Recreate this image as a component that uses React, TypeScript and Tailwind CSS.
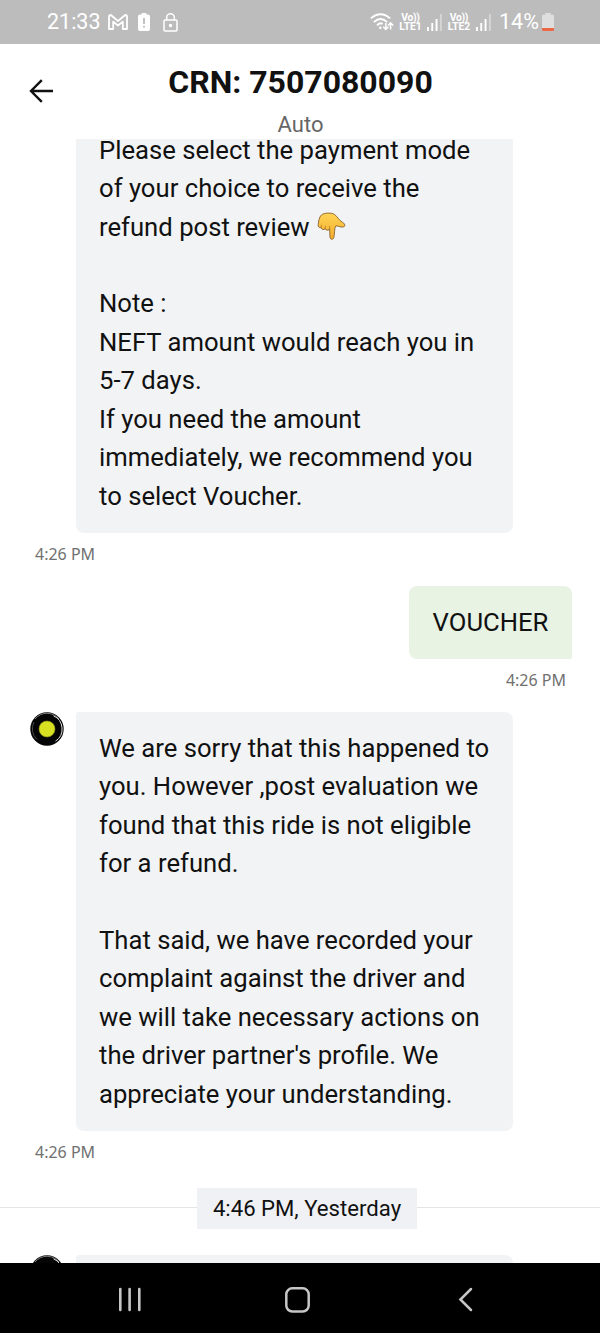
import type { ReactNode } from "react";

function StatusBar() {
  return (
    <header className="flex h-11 shrink-0 items-center justify-between bg-[#bcbcbc] pr-[46px] pl-[47px] text-white">
      <div className="flex items-center">
        <span className="w-[61px] text-[21.5px] leading-none whitespace-nowrap">21:33</span>
        <svg width="20" height="16" viewBox="0 0 20 16" fill="none" stroke="white" strokeWidth="1.8" strokeLinejoin="round">
          <path d="M1 2.8Q1 1 2.8 1L10 7L17.2 1Q19 1 19 2.8V15H14.8V7.6L10 11.5L5.2 7.6V15H1Z" />
        </svg>
        <svg className="ml-[10px]" width="12" height="18" viewBox="0 0 12 18">
          <path d="M3.5 1Q3.5 0 4.5 0H7.5Q8.5 0 8.5 1V1.5H10Q12 1.5 12 3.5V16Q12 18 10 18H2Q0 18 0 16V3.5Q0 1.5 2 1.5H3.5Z" fill="white" />
          <path d="M6 5V11M6 12.7V14.5" stroke="#bcbcbc" strokeWidth="1.8" />
        </svg>
        <svg className="ml-[13px]" width="15" height="19" viewBox="0 0 15 19" fill="none" stroke="white" strokeWidth="1.5">
          <rect x="1" y="7" width="13" height="11" rx="1" />
          <path d="M3.7 7V4.5A3.8 3.8 0 0 1 11.3 4.5V7" />
          <circle cx="7.5" cy="12.5" r="1" fill="white" />
        </svg>
      </div>
      <div className="flex items-center">
        <svg width="24" height="18" viewBox="0 0 24 18" fill="none" stroke="white" strokeWidth="1.9">
          <path d="M.8 5.4Q10.5-3 20.2 5.4M3.8 9.1Q10.5 3 17.2 9.1M7 12.4Q10.2 9.2 12.6 11" />
          <circle cx="10.3" cy="14.7" r="1.3" fill="white" stroke="none" />
          <path d="M15.8 10V16M13.2 13.7L15.8 16.4L18.4 13.7M20.6 16.5V10.2M18 12.6L20.6 9.9L23.2 12.6" strokeWidth="1.5" />
        </svg>
        <Volte name="LTE1" />
        <Signal />
        <Volte name="LTE2" />
        <Signal />
        <span className="ml-[8.5px] w-[43px] text-[21.5px] leading-none whitespace-nowrap">14%</span>
        <svg width="12" height="18" viewBox="0 0 12 18">
          <path d="M3.3 0H8.7V1.7H11Q12 1.7 12 2.7V15H0V2.7Q0 1.7 1 1.7H3.3Z" fill="#dedede" />
          <path d="M0 15H12V16.5Q12 18 10.5 18H1.5Q0 18 0 16.5Z" fill="#ee6744" />
        </svg>
      </div>
    </header>
  );
}

function Volte({ name }: { name: string }) {
  return (
    <span className="ml-[5.5px] flex w-[23px] flex-col items-center text-[10.3px] leading-[9.5px] font-bold whitespace-nowrap">
      <span className="tracking-[-0.3px]">Vo))</span>
      <span>{name}</span>
    </span>
  );
}

function Signal() {
  return (
    <svg className="ml-[5px]" width="15" height="17" viewBox="0 0 15 17" fill="white">
      <rect y="13" width="1.9" height="4" />
      <rect x="4.3" y="9" width="1.9" height="8" />
      <rect x="8.6" y="5" width="1.9" height="12" />
      <rect x="12.9" width="1.9" height="17" opacity=".4" />
    </svg>
  );
}

function PointingDown() {
  return (
    <svg className="ml-[1.5px] inline-block align-[-5px]" width="29" height="29" viewBox="0 0 29 29">
      <defs>
        <linearGradient id="skin" x1="0" y1="0" x2="0" y2="1">
          <stop offset="0" stopColor="#ffd456" />
          <stop offset="1" stopColor="#f3ad2c" />
        </linearGradient>
      </defs>
      <path
        d="M4.4 3C7 .7 14.5.4 17.6 2.5C20.7 4.7 21.8 8.3 25.4 10.2C28.5 11.8 28.6 15.1 25.6 15.1C22.5 15.1 20.5 13.4 18.6 14.1C17.3 16.5 17.8 22 16.8 25.7C16.2 28 13.1 27.7 13 25.2L12.6 16.9C11.8 18.7 9 18.7 8.3 16.8C6.7 18.2 4.5 17.5 4.1 15.7C2 16 .8 14.5 1.2 12.6C1.6 9.4 2 5.2 4.4 3Z"
        fill="url(#skin)"
        stroke="#89602e"
        strokeWidth=".9"
      />
      <path d="M4.1 15.7L4.4 12.8M8.3 16.8V13.8M12.6 16.9V13.9" fill="none" stroke="#b87822" strokeWidth=".8" />
    </svg>
  );
}

function Avatar() {
  return (
    <svg className="shrink-0" width="34" height="34" viewBox="0 0 34 34">
      <circle cx="17" cy="17" r="16.7" fill="#050505" />
      <path d="M5 7A15.4 15.4 0 0 1 29 7" fill="none" stroke="#999" strokeWidth=".8" />
      <path d="M23.5 3.8A14.5 14.5 0 0 1 25.5 29.2" fill="none" stroke="#ddd" strokeWidth="1" />
      <path d="M4 10A14.5 14.5 0 0 0 7 27.5" fill="none" stroke="#777" strokeWidth=".6" />
      <circle cx="17" cy="17" r="8" fill="#d8e022" stroke="#8e961c" strokeWidth=".6" />
    </svg>
  );
}

function Bubble({ children }: { children: ReactNode }) {
  return (
    <div className="w-[437px] rounded-tl-[3px] rounded-tr-lg rounded-br-lg rounded-bl-lg bg-[#f2f3f5] px-[23px] pt-[17px] pb-[17.5px] text-[25.66px] leading-[38.45px] whitespace-pre">
      {children}
    </div>
  );
}

function Time({ children }: { children: ReactNode }) {
  return <time className="font-['Noto_Sans',sans-serif] text-[16px] leading-[22px] text-[#707070]">{children}</time>;
}

export default function App() {
  return (
    <div className="flex h-[1333px] w-[600px] flex-col overflow-hidden bg-white font-[Roboto,sans-serif] text-[#111]">
      <StatusBar />
      <div className="grid h-[95px] shrink-0 grid-cols-[76px_449px_75px]">
        <button className="mt-[35px] ml-[29px] h-6 w-6" aria-label="Back">
          <svg width="24" height="24" viewBox="0 0 24 24" fill="none" stroke="#111" strokeWidth="2.4">
            <path d="M24 12H2M12.8 1.2L2 12L12.8 22.8" />
          </svg>
        </button>
        <div className="flex flex-col items-center whitespace-nowrap">
          <h1 className="mt-[18px] text-[32px] leading-[40px] font-bold">CRN: 7507080090</h1>
          <p className="mt-[8px] text-[22px] leading-[29px] text-[#666]">Auto</p>
        </div>
      </div>
      <main className="flex h-[1124px] shrink-0 flex-col overflow-hidden">
        <div className="-mt-[25.4px] ml-[76px] shrink-0">
          <Bubble>
            {"Please select the payment mode\nof your choice to receive the\nrefund post review "}
            <PointingDown />
            {"\n\nNote :\nNEFT amount would reach you in\n5-7 days.\nIf you need the amount\nimmediately, we recommend you\nto select Voucher."}
          </Bubble>
        </div>
        <div className="mt-[10px] ml-[35px] flex shrink-0">
          <Time>4:26 PM</Time>
        </div>
        <div className="mt-[21px] mr-[28px] flex h-[73px] w-[163px] shrink-0 items-center justify-center self-end rounded-tl-lg rounded-tr-lg rounded-br-[2px] rounded-bl-lg bg-[#e8f3e4] text-[25.66px]">
          VOUCHER
        </div>
        <div className="mt-[10px] mr-[34px] flex shrink-0 justify-end">
          <Time>4:26 PM</Time>
        </div>
        <div className="mt-[21px] ml-[30px] flex shrink-0 gap-3">
          <Avatar />
          <Bubble>
            {"We are sorry that this happened to\nyou. However ,post evaluation we\nfound that this ride is not eligible\nfor a refund.\n\nThat said, we have recorded your\ncomplaint against the driver and\nwe will take necessary actions on\nthe driver partner's profile. We\nappreciate your understanding."}
          </Bubble>
        </div>
        <div className="mt-[10px] ml-[35px] flex shrink-0">
          <Time>4:26 PM</Time>
        </div>
        <div className="mt-[25px] flex h-[41px] shrink-0 items-center">
          <div className="mb-[2px] h-px w-[197px] bg-[#e3e4e6]" />
          <div className="flex h-[41px] w-[220px] items-center justify-center bg-[#f0f1f5] text-[22.15px] whitespace-nowrap">4:46 PM, Yesterday</div>
          <div className="mb-[2px] h-px flex-1 bg-[#e3e4e6]" />
        </div>
        <div className="mt-[26px] ml-[30px] flex shrink-0 gap-3">
          <Avatar />
          <div className="h-20 w-[437px] rounded-lg rounded-tl-[3px] bg-[#f2f3f5]" />
        </div>
      </main>
      <nav className="flex h-[70px] shrink-0 items-center bg-black pt-[3px] pl-[118px]">
        <svg width="24" height="25" viewBox="0 0 24 25" stroke="#c6c6c6" strokeWidth="2.6" strokeLinecap="round">
          <path d="M2.3 2V23M11.6 2V23M21.3 2V23" />
        </svg>
        <svg className="ml-[143px]" width="25" height="26" viewBox="0 0 25 26" fill="none" stroke="#c6c6c6" strokeWidth="2.5">
          <rect x="1.3" y="1.3" width="22.4" height="23.2" rx="6" />
        </svg>
        <svg className="ml-[148px]" width="15" height="25" viewBox="0 0 15 25" fill="none" stroke="#c6c6c6" strokeWidth="2.5" strokeLinecap="round" strokeLinejoin="miter">
          <path d="M13 2L2.4 12.5L13 23" />
        </svg>
      </nav>
    </div>
  );
}
